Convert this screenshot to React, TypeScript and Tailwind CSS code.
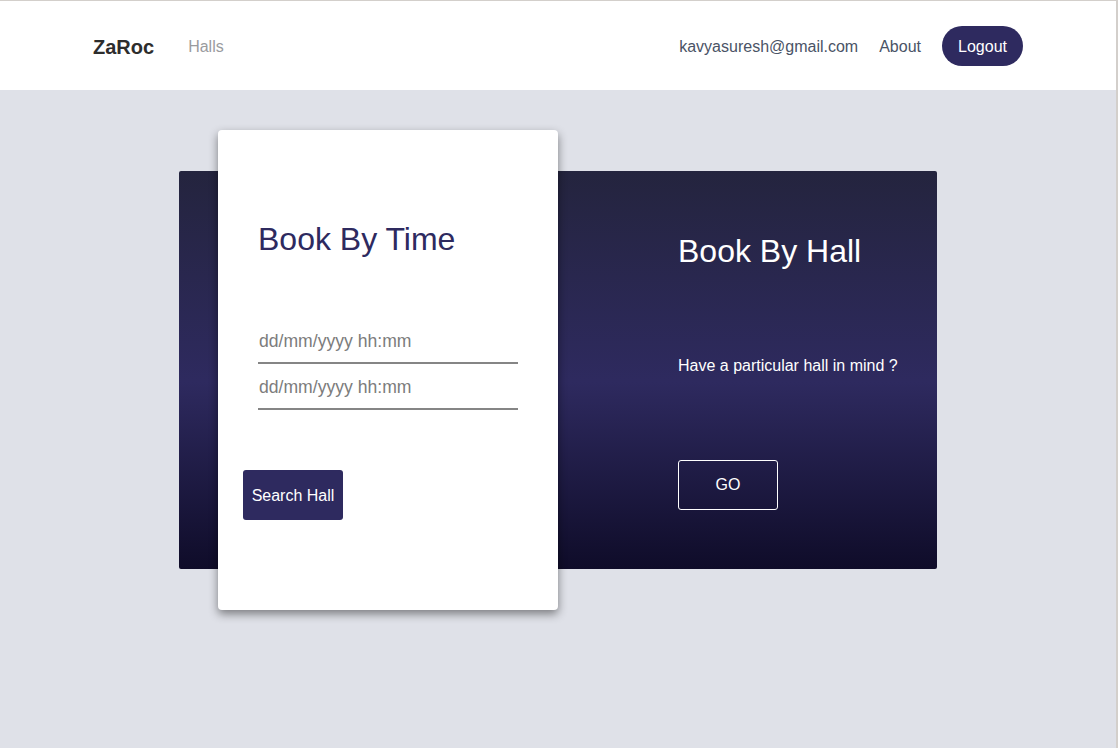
import React from "react";

export default function App() {
  return (
    <div
      className="min-h-screen w-full bg-[#dfe1e8] border-t border-r-2 border-[#d3cfcb] text-[16px]"
      style={{ fontFamily: '"Liberation Sans", Arial, sans-serif' }}
    >
      <nav className="h-[89px] bg-white flex items-center justify-between px-[93px] pt-[2px]">
        <div className="flex items-center">
          <span className="text-[20px] font-bold text-[#2d2d2d]">ZaRoc</span>
          <span className="ml-[34px] text-[#9a9b9e]">Halls</span>
        </div>
        <div className="flex items-center">
          <span className="text-[#4a5366]">kavyasuresh@gmail.com</span>
          <span className="ml-[21px] text-[#4a5366]">About</span>
          <button className="ml-[21px] -mt-[2px] h-[40px] w-[81px] rounded-full bg-[#2e2a5f] text-white">
            <span className="relative top-[1px]">Logout</span>
          </button>
        </div>
      </nav>

      <div className="pt-[81px] flex justify-center">
        <div className="relative w-[758px] h-[398px] rounded-[2px] bg-[linear-gradient(to_bottom,#24243e,#2e2a5f_53%,#0f0c29)] flex">
          <div className="w-[379px]" />
          <div className="flex-1 pl-[120px] pt-[62px] text-white">
            <h2 className="text-[32px] leading-[37px]">Book By Hall</h2>
            <p className="mt-[87px] leading-[18px]">Have a particular hall in mind ?</p>
            <button className="mt-[85px] w-[100px] h-[50px] border border-white rounded-[3px] text-white">
              GO
            </button>
          </div>

          <div className="absolute left-[39px] top-[-41px] w-[340px] h-[480px] bg-white rounded-[4px] shadow-[0_4px_10px_rgba(0,0,0,0.45)] pt-[91px]">
            <h2 className="pl-[40px] text-[32px] leading-[37px] text-[#2e2a5f]">Book By Time</h2>
            <div className="mt-[60px] pl-[40px]">
              <div className="w-[260px] h-[46px] border-b-2 border-[#858585] flex items-center pl-[1px] text-[#7c7c7c]">
                <span className="text-[17.6px] leading-[20px] pt-[1px]">dd/mm/yyyy hh:mm</span>
              </div>
              <div className="w-[260px] h-[46px] border-b-2 border-[#858585] flex items-center pl-[1px] text-[#7c7c7c]">
                <span className="text-[17.6px] leading-[20px] pt-[1px]">dd/mm/yyyy hh:mm</span>
              </div>
            </div>
            <button className="ml-[25px] mt-[60px] w-[100px] h-[50px] bg-[#2e2a5f] rounded-[3px] text-white">
              <span className="relative top-[1px]">Search Hall</span>
            </button>
          </div>
        </div>
      </div>
    </div>
  );
}
